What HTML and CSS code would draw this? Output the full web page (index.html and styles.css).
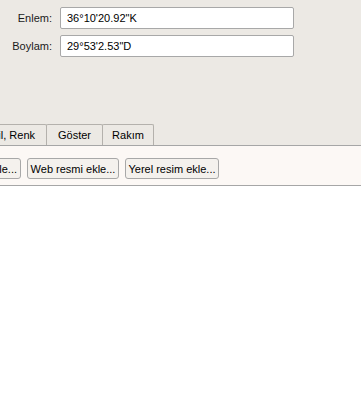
FILE: index.html
```html
<!DOCTYPE html>
<html>
<head>
<meta charset="utf-8">
<link rel="stylesheet" href="styles.css">
</head>
<body>
<div class="top">
  <div class="form">
    <label class="lbl">Enlem:</label>
    <div class="field">36°10'20.92"K</div>
    <label class="lbl">Boylam:</label>
    <div class="field">29°53'2.53"D</div>
  </div>
  <div class="tabs">
    <div class="tab first">Stil, Renk</div>
    <div class="tab">Göster</div>
    <div class="tab">Rakım</div>
  </div>
</div>
<div class="panel">
  <div class="btns">
    <button class="btn first">Resim ekle...</button>
    <button class="btn">Web resmi ekle...</button>
    <button class="btn">Yerel resim ekle...</button>
  </div>
</div>
<div class="rest"></div>
</body>
</html>
```
FILE: styles.css
```css
html, body {
  margin: 0;
  padding: 0;
  background: #ffffff;
  font-family: "Liberation Sans", Arial, sans-serif;
  font-size: 11px;
  color: #000;
  overflow: hidden;
}
.top {
  background: #ece9e4;
  padding-top: 7px;
}
.form {
  display: grid;
  grid-template-columns: 52px 234px;
  column-gap: 8px;
  row-gap: 6px;
  align-items: center;
}
.lbl {
  text-align: right;
  color: #1a1a1a;
}
.field {
  box-sizing: border-box;
  height: 22px;
  border: 1px solid #a8a8a8;
  border-radius: 2px;
  background: #fff;
  padding: 0 6px;
  line-height: 20px;
  white-space: nowrap;
}
.tabs {
  display: flex;
  margin-top: 67px;
  margin-left: -40px;
  height: 21px;
  border-bottom: 1px solid #a6a6a6;
  align-items: flex-end;
}
.tab {
  box-sizing: border-box;
  height: 21px;
  border: 1px solid #b4b1ac;
  border-bottom: none;
  border-radius: 2px 2px 0 0;
  background: #ece9e4;
  line-height: 21px;
  white-space: nowrap;
  text-align: center;
}
.tab + .tab {
  margin-left: -1px;
}
.tab.first {
  width: 87px;
  text-align: right;
  padding-right: 11px;
}
.tab:nth-child(2) { width: 57px; }
.tab:nth-child(3) { width: 52px; }
.panel {
  background: #fcf8f5;
  border-bottom: 1px solid #a6a6a6;
  height: 39px;
}
.btns {
  display: flex;
  gap: 6px;
  padding-top: 12px;
  margin-left: -60px;
}
.btn {
  font: inherit;
  height: 21px;
  box-sizing: border-box;
  border: 1px solid #a8a8a8;
  border-radius: 3px;
  background: #f4f1ed;
  padding: 0;
  color: #000;
  white-space: nowrap;
  text-align: center;
  flex: none;
}
.btn.first { width: 81px; text-align: right; padding-right: 3px; }
.btn:nth-child(2) { width: 92px; }
.btn:nth-child(3) { width: 94px; }
.rest {
  height: 240px;
  background: #fff;
}
```
